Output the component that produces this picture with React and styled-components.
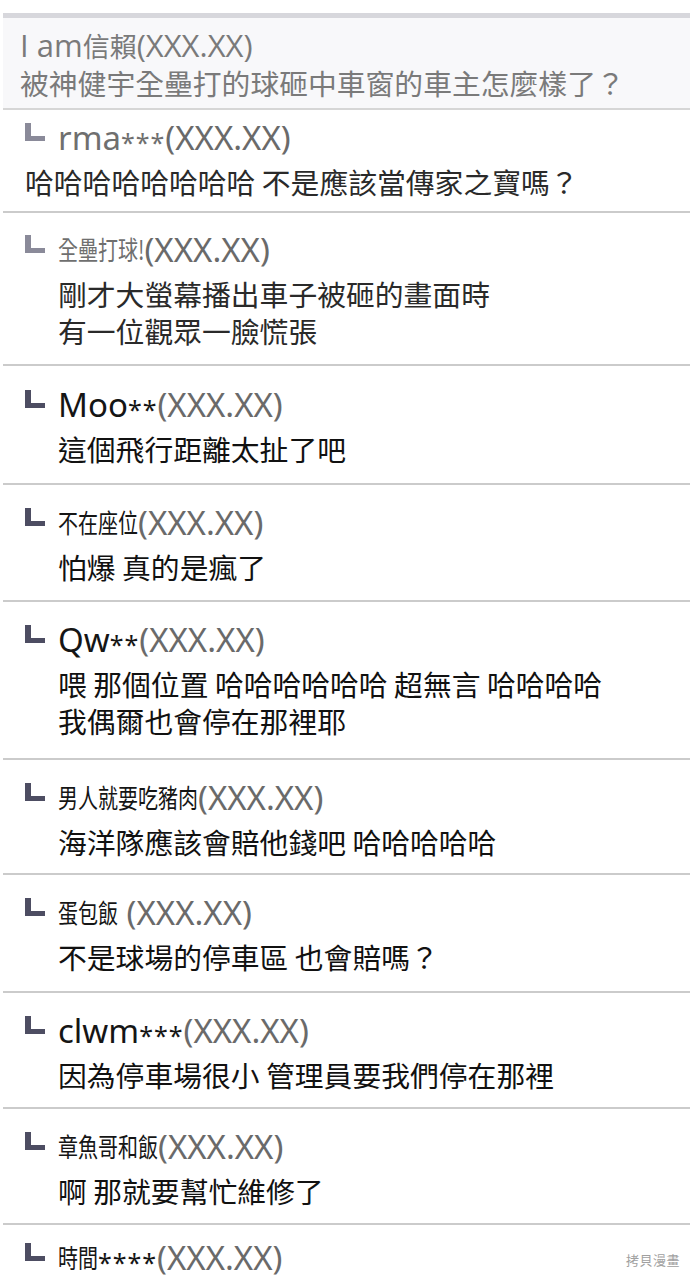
import React from "react";
import styled, { createGlobalStyle } from "styled-components";

const Global = createGlobalStyle`
  html, body { margin: 0; padding: 0; background: #fff; }
  body { font-family: "Noto Sans CJK TC", "Noto Sans", sans-serif; }
`;

const Page = styled.div`
  width: 690px;
  background: #fff;
  padding-top: 13px;
`;

const TopBar = styled.div`
  margin-left: 3px;
  height: 5px;
  background: #d7d7dc;
`;

const Header = styled.div`
  margin-left: 3px;
  background: #f8f8fa;
  padding: 8px 0 6px 17px;
  border-bottom: 2px solid #d6d6d6;
  color: #7a7a7a;
`;

const HeaderLine = styled.div`
  height: 38px;
  line-height: 38px;
  font-size: 28.8px;
  white-space: nowrap;
`;

const HeaderLatin = styled.span`
  font-family: "Open Sans", "Noto Sans", sans-serif;
  font-size: 31px;
`;

const HeaderCjk = styled.span`
  font-size: 27px;
`;

const Row = styled.div`
  position: relative;
  margin-left: 3px;
  padding: ${(p) => p.$pt}px 0 ${(p) => p.$pb}px 22px;
  border-bottom: ${(p) => (p.$last ? "none" : "2px solid #cbcbcb")};
`;

const NameLine = styled.div`
  display: flex;
  align-items: center;
  height: 40px;
  white-space: nowrap;
`;

const Mark = styled.span`
  flex: none;
  box-sizing: border-box;
  width: 20px;
  height: 18px;
  margin-right: 13px;
  transform: translateY(-5px);
  border-left: 6px solid ${(p) => (p.$faint ? "#8a8a99" : "#4d4d62")};
  border-bottom: 5px solid ${(p) => (p.$faint ? "#8a8a99" : "#4d4d62")};
`;

const Name = styled.span`
  font-family: "Noto Sans", "Noto Sans CJK TC", sans-serif;
  font-size: 33px;
  color: ${(p) => (p.$faint ? "#6f6f6f" : "#151515")};
  white-space: pre;
`;

const CjkName = styled.span`
  display: inline-block;
  font-family: "Noto Sans CJK TC", sans-serif;
  font-size: 20px;
  transform: scaleY(1.32);
  transform-origin: center 60%;
  color: ${(p) => (p.$faint ? "#6f6f6f" : "#151515")};
`;

const Star = styled.span`
  font-family: "Noto Sans", sans-serif;
  font-size: 25px;
  letter-spacing: 1px;
  transform: translateY(5px);
  color: ${(p) => (p.$faint ? "#6f6f6f" : "#151515")};
`;

const Ip = styled.span`
  font-family: "Noto Sans", sans-serif;
  font-size: 33px;
  color: #6a6a6a;
`;

const Body = styled.div`
  margin-top: 6px;
  padding-left: ${(p) => (p.$flush ? 0 : 33)}px;
  font-size: 28.8px;
  line-height: 37px;
  color: ${(p) => (p.$faint ? "#2a2a2a" : "#111")};
  white-space: nowrap;
`;

const Watermark = styled.div`
  position: absolute;
  right: 10px;
  top: 25px;
  font-size: 13px;
  color: #a0a0a0;
  letter-spacing: 0.5px;
`;

const renderName = (parts, faint) =>
  parts.map((p, i) => {
    if (p.t === "cjk")
      return (
        <CjkName key={i} $faint={faint}>
          {p.v}
        </CjkName>
      );
    if (p.t === "star")
      return (
        <Star key={i} $faint={faint}>
          {p.v}
        </Star>
      );
    return (
      <Name key={i} $faint={faint}>
        {p.v}
      </Name>
    );
  });

const rows = [
  { name: [{ t: "lat", v: "rma" }, { t: "star", v: "***" }], body: ["哈哈哈哈哈哈哈哈 不是應該當傳家之寶嗎？"], pt: 7, pb: 11, faint: true, flush: true },
  { name: [{ t: "cjk", v: "全壘打球!" }], body: ["剛才大螢幕播出車子被砸的畫面時", "有一位觀眾一臉慌張"], pt: 16, pb: 15, faint: true },
  { name: [{ t: "lat", v: "Moo" }, { t: "star", v: "**" }], body: ["這個飛行距離太扯了吧"], pt: 18, pb: 16 },
  { name: [{ t: "cjk", v: "不在座位" }], body: ["怕爆 真的是瘋了"], pt: 17, pb: 15 },
  { name: [{ t: "lat", v: "Qw" }, { t: "star", v: "**" }], body: ["喂 那個位置 哈哈哈哈哈哈 超無言 哈哈哈哈", "我偶爾也會停在那裡耶"], pt: 17, pb: 19 },
  { name: [{ t: "cjk", v: "男人就要吃豬肉" }], body: ["海洋隊應該會賠他錢吧 哈哈哈哈哈"], pt: 17, pb: 13 },
  { name: [{ t: "cjk", v: "蛋包飯" }, { t: "lat", v: " " }], body: ["不是球場的停車區 也會賠嗎？"], pt: 17, pb: 16 },
  { name: [{ t: "lat", v: "clwm" }, { t: "star", v: "***" }], body: ["因為停車場很小 管理員要我們停在那裡"], pt: 17, pb: 14 },
  { name: [{ t: "cjk", v: "章魚哥和飯" }], body: ["啊 那就要幫忙維修了"], pt: 17, pb: 14 },
  { name: [{ t: "cjk", v: "時間" }, { t: "star", v: "****" }], body: [], pt: 12, pb: 0, last: true },
];

export default function App() {
  return (
    <Page>
      <Global />
      <TopBar />
      <Header>
        <HeaderLine>
          <HeaderLatin>I am</HeaderLatin>
          <HeaderCjk>信賴</HeaderCjk>
          <HeaderLatin>(XXX.XX)</HeaderLatin>
        </HeaderLine>
        <HeaderLine>被神健宇全壘打的球砸中車窗的車主怎麼樣了？</HeaderLine>
      </Header>
      {rows.map((r, i) => (
        <Row key={i} $pt={r.pt} $pb={r.pb} $last={r.last}>
          <NameLine>
            <Mark $faint={r.faint} />
            {renderName(r.name, r.faint)}
            <Ip>(XXX.XX)</Ip>
          </NameLine>
          {r.body.length > 0 && (
            <Body $flush={r.flush} $faint={r.faint}>
              {r.body.map((line, j) => (
                <div key={j}>{line}</div>
              ))}
            </Body>
          )}
          {r.last && <Watermark>拷貝漫畫</Watermark>}
        </Row>
      ))}
    </Page>
  );
}
